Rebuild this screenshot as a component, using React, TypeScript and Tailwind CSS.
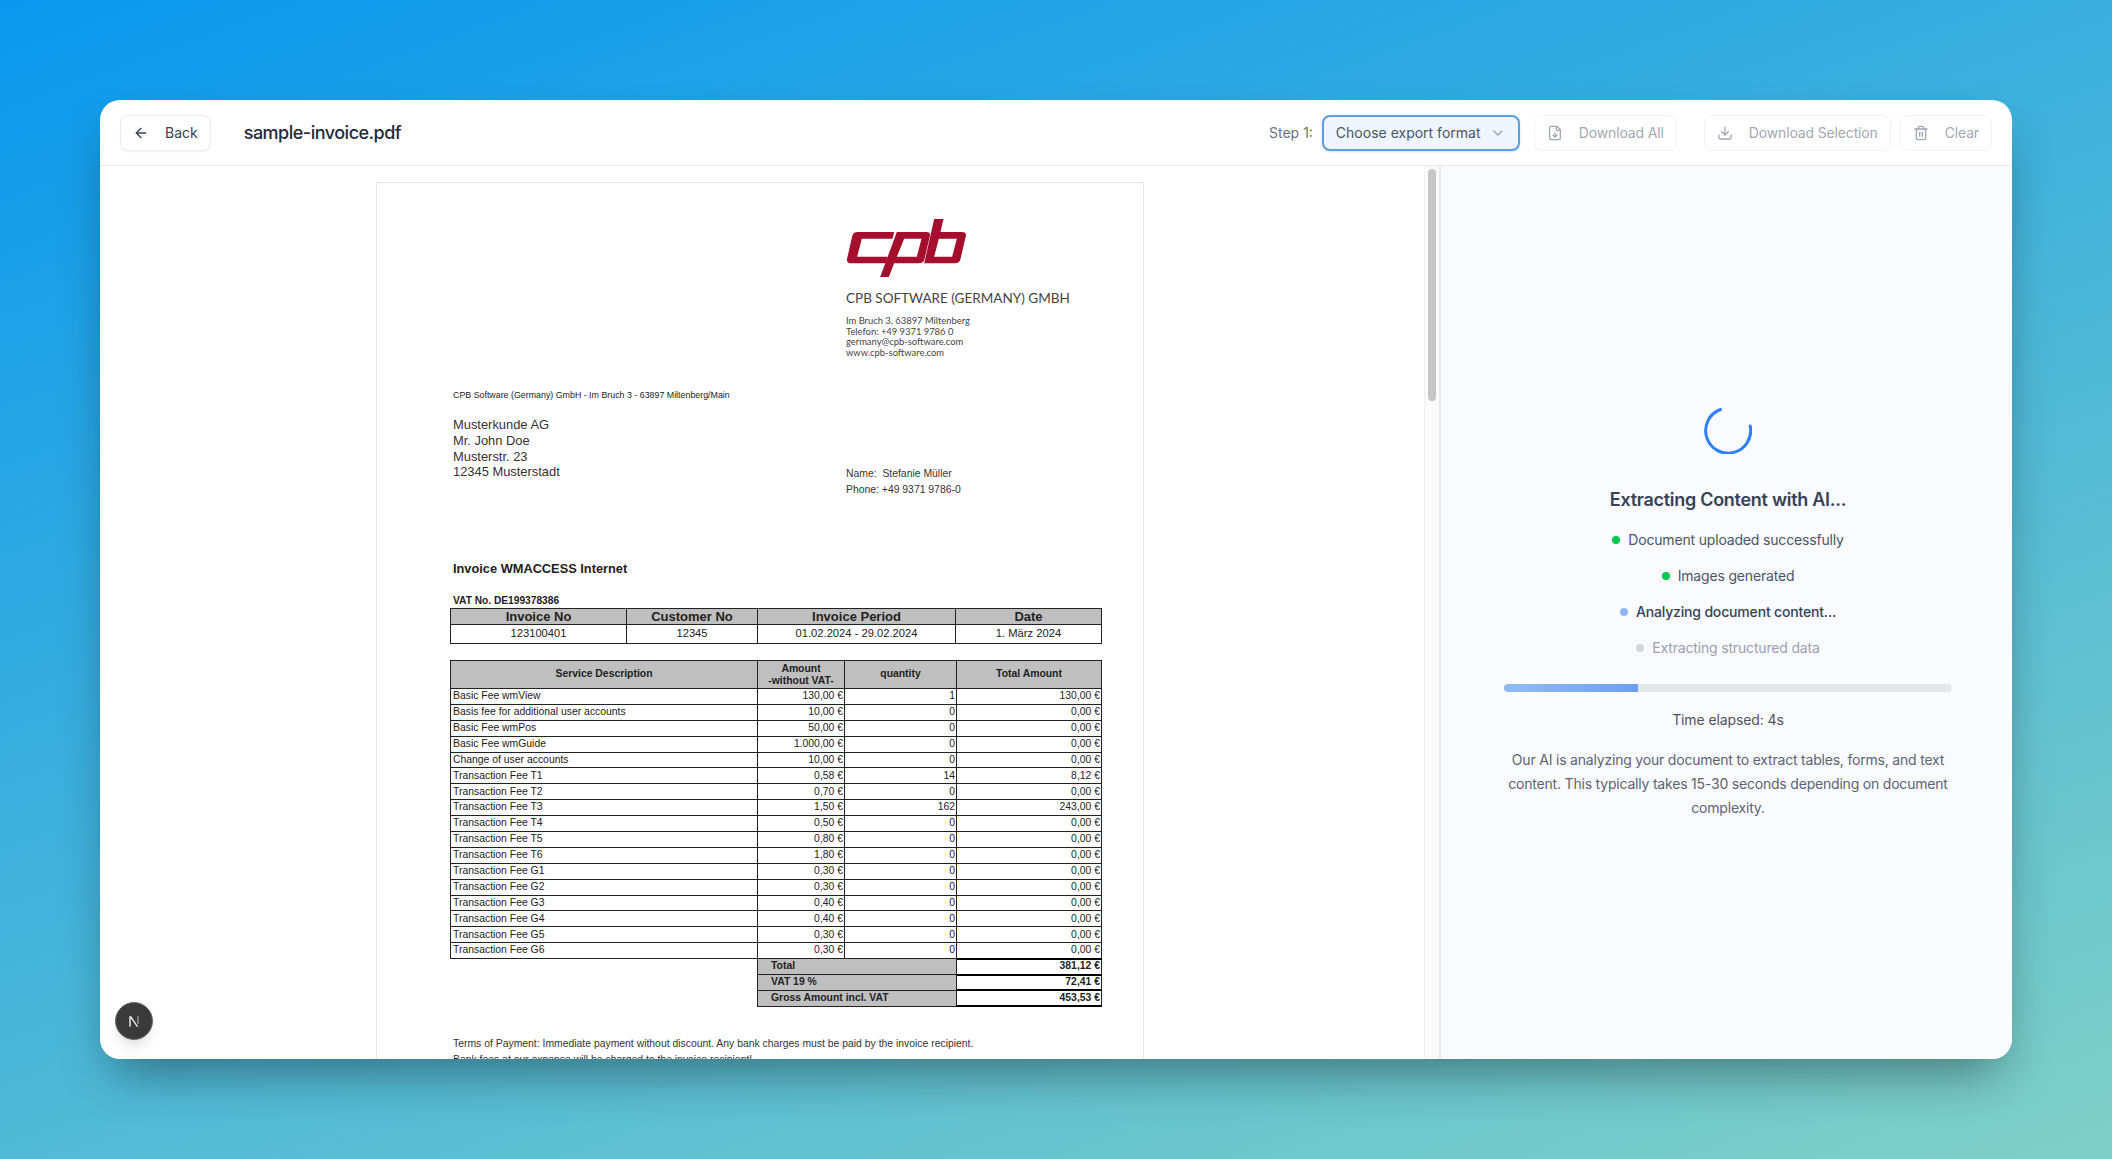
import React from 'react';
import { ArrowLeft, ChevronDown, Download, FileDown, Trash2 } from 'lucide-react';

const rows = [
    ['Basic Fee wmView', '130,00 €', '1', '130,00 €'],
    ['Basis fee for additional user accounts', '10,00 €', '0', '0,00 €'],
    ['Basic Fee wmPos', '50,00 €', '0', '0,00 €'],
    ['Basic Fee wmGuide', '1.000,00 €', '0', '0,00 €'],
    ['Change of user accounts', '10,00 €', '0', '0,00 €'],
    ['Transaction Fee T1', '0,58 €', '14', '8,12 €'],
    ['Transaction Fee T2', '0,70 €', '0', '0,00 €'],
    ['Transaction Fee T3', '1,50 €', '162', '243,00 €'],
    ['Transaction Fee T4', '0,50 €', '0', '0,00 €'],
    ['Transaction Fee T5', '0,80 €', '0', '0,00 €'],
    ['Transaction Fee T6', '1,80 €', '0', '0,00 €'],
    ['Transaction Fee G1', '0,30 €', '0', '0,00 €'],
    ['Transaction Fee G2', '0,30 €', '0', '0,00 €'],
    ['Transaction Fee G3', '0,40 €', '0', '0,00 €'],
    ['Transaction Fee G4', '0,40 €', '0', '0,00 €'],
    ['Transaction Fee G5', '0,30 €', '0', '0,00 €'],
    ['Transaction Fee G6', '0,30 €', '0', '0,00 €'],
];

const totals = [
    ['Total', '381,12 €'],
    ['VAT 19 %', '72,41 €'],
    ['Gross Amount incl. VAT', '453,53 €'],
];

const steps = [
    { label: 'Document uploaded successfully', dot: 'bg-[#00c950]', text: 'text-[#4a5565]' },
    { label: 'Images generated', dot: 'bg-[#00c950]', text: 'text-[#4a5565]' },
    { label: 'Analyzing document content...', dot: 'bg-[#8fb6fb]', text: 'text-[#364153] font-medium' },
    { label: 'Extracting structured data', dot: 'bg-[#d1d5dc]', text: 'text-[#99a1af]' },
];

const CpbLogo = () => (
    <svg viewBox="198 118 362 174" className="h-[58px] w-[121px]" fill="#a50f2d" fillRule="evenodd">
        <path d="M228 157H342L337 177H245L231 231H322L317 251H212Q198 251 201 236L216 170Q219 157 232 157Z" />
        <path d="M350 157H440Q452 157 449 170L433 238Q430 251 416 251H342L326 292H300ZM372 177L350 231H410L424 177Z" />
        <path d="M462 118H490L481 157H545Q560 157 557 170L541 238Q538 251 524 251H432ZM476 177L462 231H516L530 177Z" />
    </svg>
);

const ToolButton = ({ icon, label }: { icon: React.ReactNode; label: string }) => (
    <button
        type="button"
        disabled
        className="flex h-9 items-center gap-4 rounded-lg border border-[#f1f2f4] bg-white px-3 text-sm tracking-[-0.15px] text-[#a3a8b0]"
    >
        {icon}
        {label}
    </button>
);

const InvoicePage = () => (
    <div className="h-[900px] w-[768px] border border-[#e5e7eb] bg-white pl-[76px] font-['Liberation_Sans',Arial,sans-serif] text-[#222]">
        <div className="ml-[393px] pt-[36px]">
            <CpbLogo />
            <div className="mt-[14px] whitespace-nowrap font-['Lato',sans-serif] text-[13.5px] leading-[14px] text-[#444]">
                CPB SOFTWARE (GERMANY) GMBH
            </div>
            <div className="mt-[11px] font-['Lato',sans-serif] text-[9.4px] leading-[10.5px] text-[#444]">
                <div>Im Bruch 3, 63897 Miltenberg</div>
                <div>Telefon: +49 9371 9786 0</div>
                <div>germany@cpb-software.com</div>
                <div>www.cpb-software.com</div>
            </div>
        </div>

        <div className="mt-[32px] text-[8.85px] leading-[10px]">
            CPB Software (Germany) GmbH - Im Bruch 3 - 63897 Miltenberg/Main
        </div>

        <div className="mt-[17px] flex">
            <div className="w-[393px] text-[12.9px] leading-[15.8px] text-[#333]">
                <div>Musterkunde AG</div>
                <div>Mr. John Doe</div>
                <div>Musterstr. 23</div>
                <div>12345 Musterstadt</div>
            </div>
            <div className="pt-[49px] text-[10.4px] leading-[16px] text-[#333]">
                <div>Name:&nbsp; Stefanie Müller</div>
                <div>Phone: +49 9371 9786-0</div>
            </div>
        </div>

        <div className="mt-[63px] text-[12.8px] font-bold leading-[16px]">Invoice WMACCESS Internet</div>
        <div className="mt-[18px] text-[10.2px] font-bold leading-[12px]">VAT No. DE199378386</div>

        <table className="-ml-[3px] mt-[1px] w-[651px] table-fixed border-collapse border border-[#222] text-center text-[11.2px]">
            <colgroup>
                <col className="w-[176px]" />
                <col className="w-[131px]" />
                <col className="w-[198px]" />
                <col className="w-[146px]" />
            </colgroup>
            <tbody>
                <tr className="h-[16px] bg-[#bfbfbf] text-[13px] font-bold">
                    <td className="border border-[#222] p-0 leading-none">Invoice No</td>
                    <td className="border border-[#222] p-0 leading-none">Customer No</td>
                    <td className="border border-[#222] p-0 leading-none">Invoice Period</td>
                    <td className="border border-[#222] p-0 leading-none">Date</td>
                </tr>
                <tr className="h-[19px]">
                    <td className="border border-[#222] p-0 leading-none">123100401</td>
                    <td className="border border-[#222] p-0 leading-none">12345</td>
                    <td className="border border-[#222] p-0 leading-none">01.02.2024 - 29.02.2024</td>
                    <td className="border border-[#222] p-0 leading-none">1. März 2024</td>
                </tr>
            </tbody>
        </table>

        <table className="-ml-[3px] mt-[16px] w-[651px] table-fixed border-collapse text-[10.4px] leading-none">
            <colgroup>
                <col className="w-[307px]" />
                <col className="w-[87px]" />
                <col className="w-[112px]" />
                <col className="w-[145px]" />
            </colgroup>
            <tbody>
                <tr className="h-[28px] bg-[#bfbfbf] text-center font-bold">
                    <td className="border border-[#222] p-0">Service Description</td>
                    <td className="border border-[#222] p-0 leading-[12px]">
                        Amount
                        <br />
                        -without VAT-
                    </td>
                    <td className="border border-[#222] p-0">quantity</td>
                    <td className="border border-[#222] p-0">Total Amount</td>
                </tr>
                {rows.map((row) => (
                    <tr key={row[0]} className="h-[15.9px]">
                        <td className="border border-[#222] p-0 pl-[2px]">{row[0]}</td>
                        <td className="border border-[#222] p-0 pr-[1px] text-right">{row[1]}</td>
                        <td className="border border-[#222] p-0 pr-[1px] text-right">{row[2]}</td>
                        <td className="border border-[#222] p-0 pr-[1px] text-right">{row[3]}</td>
                    </tr>
                ))}
                {totals.map((row) => (
                    <tr key={row[0]} className="h-[15.9px] font-bold">
                        <td className="border-0 p-0" />
                        <td colSpan={2} className="border border-[#222] bg-[#bfbfbf] p-0 pl-[13px]">
                            {row[0]}
                        </td>
                        <td className="border-x border-y-2 border-x-[#222] border-y-black p-0 pr-[1px] text-right">{row[1]}</td>
                    </tr>
                ))}
            </tbody>
        </table>

        <div className="mt-[29px] text-[10.4px] leading-[16px] text-[#333]">
            <div className="whitespace-nowrap">Terms of Payment: Immediate payment without discount. Any bank charges must be paid by the invoice recipient.</div>
            <div className="whitespace-nowrap">Bank fees at our expense will be charged to the invoice recipient!</div>
        </div>
    </div>
);

const ProgressPanel = () => (
    <div className="flex w-[571px] flex-col items-center bg-[#fafbfe] pl-[3px] pt-[240px]">
        <svg viewBox="0 0 48 48" className="h-12 w-12" fill="none" stroke="#2b7fff" strokeWidth="3" strokeLinecap="round">
            <path d="M16.5 3.5A22.5 22.5 0 1 0 46.2 20" />
        </svg>
        <h2 className="mt-[32px] text-lg font-semibold leading-7 tracking-[-0.28px] text-[#364153]">Extracting Content with AI...</h2>
        <div className="mt-[16px] flex flex-col items-center gap-4">
            {steps.map((step) => (
                <div key={step.label} className={`flex items-center gap-2 text-sm leading-5 tracking-[-0.17px] ${step.text}`}>
                    <span className={`h-2 w-2 rounded-full ${step.dot}`} />
                    {step.label}
                </div>
            ))}
        </div>
        <div className="mt-[26px] h-2 w-[448px] overflow-hidden rounded-full bg-[#e5e7eb]">
            <div className="h-full w-[30%] bg-gradient-to-r from-[#90bdf4] to-[#6c9ef3]" />
        </div>
        <p className="mt-[18px] text-sm leading-5 tracking-[-0.1px] text-[#4a5565]">Time elapsed: 4s</p>
        <p className="mt-[18px] w-[448px] text-center text-sm leading-6 tracking-[-0.2px] text-[#5b6472]">
            Our AI is analyzing your document to extract tables, forms, and text content. This typically takes 15-30 seconds depending on document complexity.
        </p>
    </div>
);

export default function App() {
    return (
        <div className="flex h-[1159px] justify-center overflow-hidden bg-[linear-gradient(160deg,#0a98ee_0%,#80d0c6_100%)] pt-[100px] font-['Inter',sans-serif]">
            <div className="relative flex h-[959px] w-[1912px] flex-col overflow-hidden rounded-[20px] bg-white shadow-[0_25px_50px_-12px_rgba(0,0,0,0.4)]">
                <header className="flex h-[66px] flex-none items-center border-b border-[#e5e7eb] px-5 pt-[1px]">
                    <button
                        type="button"
                        className="flex h-9 items-center gap-4 rounded-lg border border-[#e9ebee] bg-white px-3 text-sm text-[#364153] shadow-xs"
                    >
                        <ArrowLeft size={16} />
                        Back
                    </button>
                    <h1 className="ml-[33px] text-lg font-medium tracking-[-0.5px] text-[#1e2939]">sample-invoice.pdf</h1>

                    <span className="ml-auto text-sm text-[#6a7282]">Step 1:</span>
                    <button
                        type="button"
                        className="ml-[9px] flex h-9 w-[198px] items-center justify-between rounded-lg border-2 border-[#5a9fe4] bg-[#eff6ff] px-3 text-sm text-[#4a5565] shadow-sm"
                    >
                        Choose export format
                        <ChevronDown size={16} className="text-[#99a1af]" />
                    </button>
                    <div className="ml-[14px]">
                        <ToolButton icon={<FileDown size={16} />} label="Download All" />
                    </div>
                    <div className="ml-[27px]">
                        <ToolButton icon={<Download size={16} />} label="Download Selection" />
                    </div>
                    <div className="ml-[9px]">
                        <ToolButton icon={<Trash2 size={16} />} label="Clear" />
                    </div>
                </header>

                <div className="flex min-h-0 flex-1">
                    <div className="min-w-0 flex-1 overflow-hidden pl-[276px] pt-[16px]">
                        <InvoicePage />
                    </div>
                    <div className="w-[15px] flex-none border-l border-[#f0f0f0] bg-[#fbfbfb] pl-[3px] pt-[3px]">
                        <div className="h-[232px] w-2 rounded-full bg-[#c6c6c6]" />
                    </div>
                    <div className="w-[2px] flex-none bg-[#e8e9eb]" />
                    <ProgressPanel />
                </div>

                <div className="absolute bottom-[19px] left-[15px] flex h-[38px] w-[38px] items-center justify-center rounded-full border border-[#6b6b6b] bg-[#3a3a3a] shadow-lg">
                    <svg viewBox="0 0 18 18" className="h-[17px] w-[17px]">
                        <path d="M3.5 3.5H5.6L13 14.5H11.4L5 5.3V14.5H3.5Z" fill="#f2f2f2" />
                        <rect x="12" y="3.5" width="1.5" height="8" fill="#9a9a9a" />
                    </svg>
                </div>
            </div>
        </div>
    );
}
